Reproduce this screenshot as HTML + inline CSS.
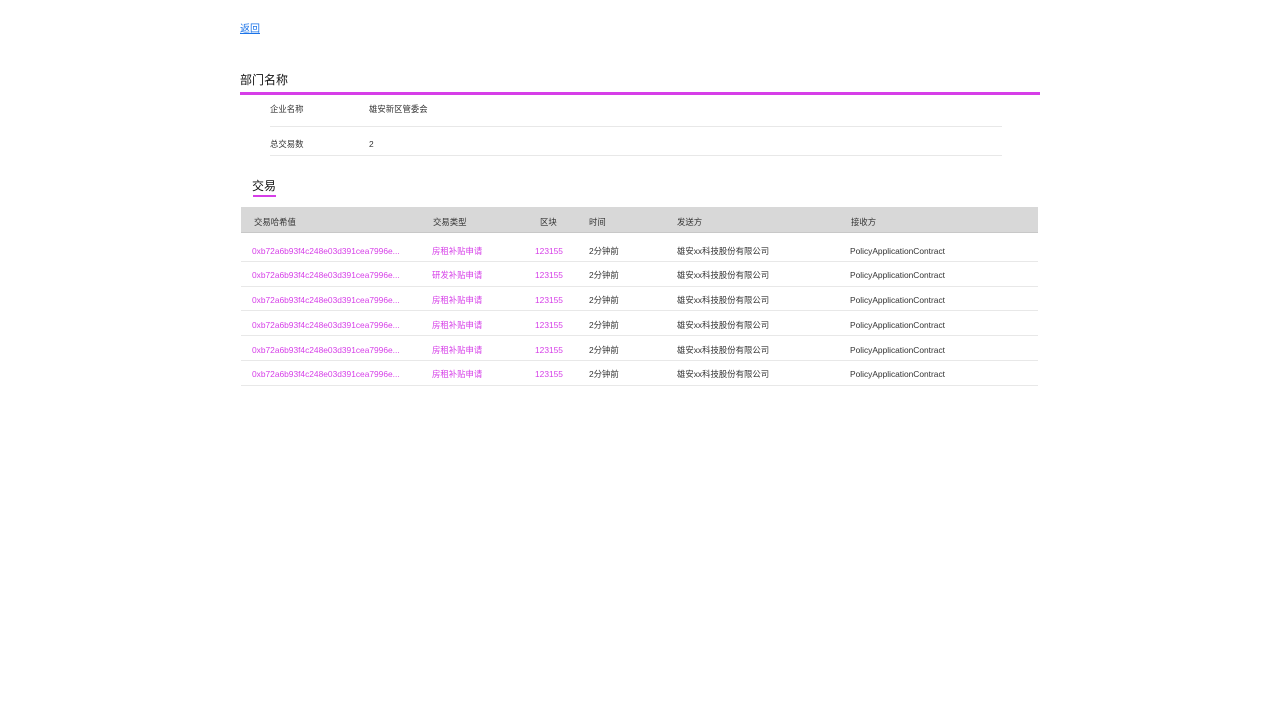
<!DOCTYPE html>
<html><head><meta charset="utf-8"><style>
body{margin:0;width:1280px;height:720px;background:#fff;font-family:"Liberation Sans","Noto Sans CJK SC",sans-serif;position:relative;overflow:hidden}
.a{position:absolute;white-space:nowrap;line-height:1}
.t{font-size:8.4px;color:#333}
.t.p{color:#d63ee8}
.ln{position:absolute;height:1px;background:#e8e8e8}
</style></head><body>
<a class="a" href="#" style="left:240px;top:25px;font-size:10px;color:#1a73e8;text-decoration:underline">返回</a>
<div class="a" style="left:240px;top:74px;font-size:12px;color:#111">部门名称</div>
<div style="position:absolute;left:240px;top:92px;width:800px;height:3px;background:#d63ee8"></div>
<div class="a t" style="left:270px;top:105px">企业名称</div>
<div class="a t" style="left:369px;top:105px">雄安新区管委会</div>
<div class="ln" style="left:270px;top:126px;width:732px"></div>
<div class="a t" style="left:270px;top:140px">总交易数</div>
<div class="a t" style="left:369px;top:140px">2</div>
<div class="ln" style="left:270px;top:155px;width:732px"></div>
<div class="a" style="left:252px;top:180px;font-size:12px;color:#111">交易</div>
<div style="position:absolute;left:253px;top:195px;width:23px;height:2px;background:#d63ee8"></div>
<div style="position:absolute;left:241px;top:207px;width:797px;height:25px;background:#d8d8d8;border-bottom:1px solid #c8c8c8"></div>
<div class="a t" style="left:254px;top:218px">交易哈希值</div>
<div class="a t" style="left:433px;top:218px">交易类型</div>
<div class="a t" style="left:540px;top:218px">区块</div>
<div class="a t" style="left:589px;top:218px">时间</div>
<div class="a t" style="left:677px;top:218px">发送方</div>
<div class="a t" style="left:851px;top:218px">接收方</div>
<div id="rows"></div>
<script>
var ys=[246,270.5,295,320,345,369.5],types=["房租补贴申请","研发补贴申请","房租补贴申请","房租补贴申请","房租补贴申请","房租补贴申请"],h="";
ys.forEach(function(y,i){
var ty=y+0.5;
h+='<div class="a t p" style="left:252px;top:'+ty+'px">0xb72a6b93f4c248e03d391cea7996e...</div>'+
'<div class="a t p" style="left:432px;top:'+ty+'px">'+types[i]+'</div>'+
'<div class="a t p" style="left:535px;top:'+ty+'px">123155</div>'+
'<div class="a t" style="left:589px;top:'+ty+'px">2分钟前</div>'+
'<div class="a t" style="left:677px;top:'+ty+'px">雄安xx科技股份有限公司</div>'+
'<div class="a t" style="left:850px;top:'+ty+'px">PolicyApplicationContract</div>'+
'<div class="ln" style="left:241px;top:'+(y+15)+'px;width:797px"></div>';});
document.getElementById('rows').innerHTML=h;
</script>
</body></html>
